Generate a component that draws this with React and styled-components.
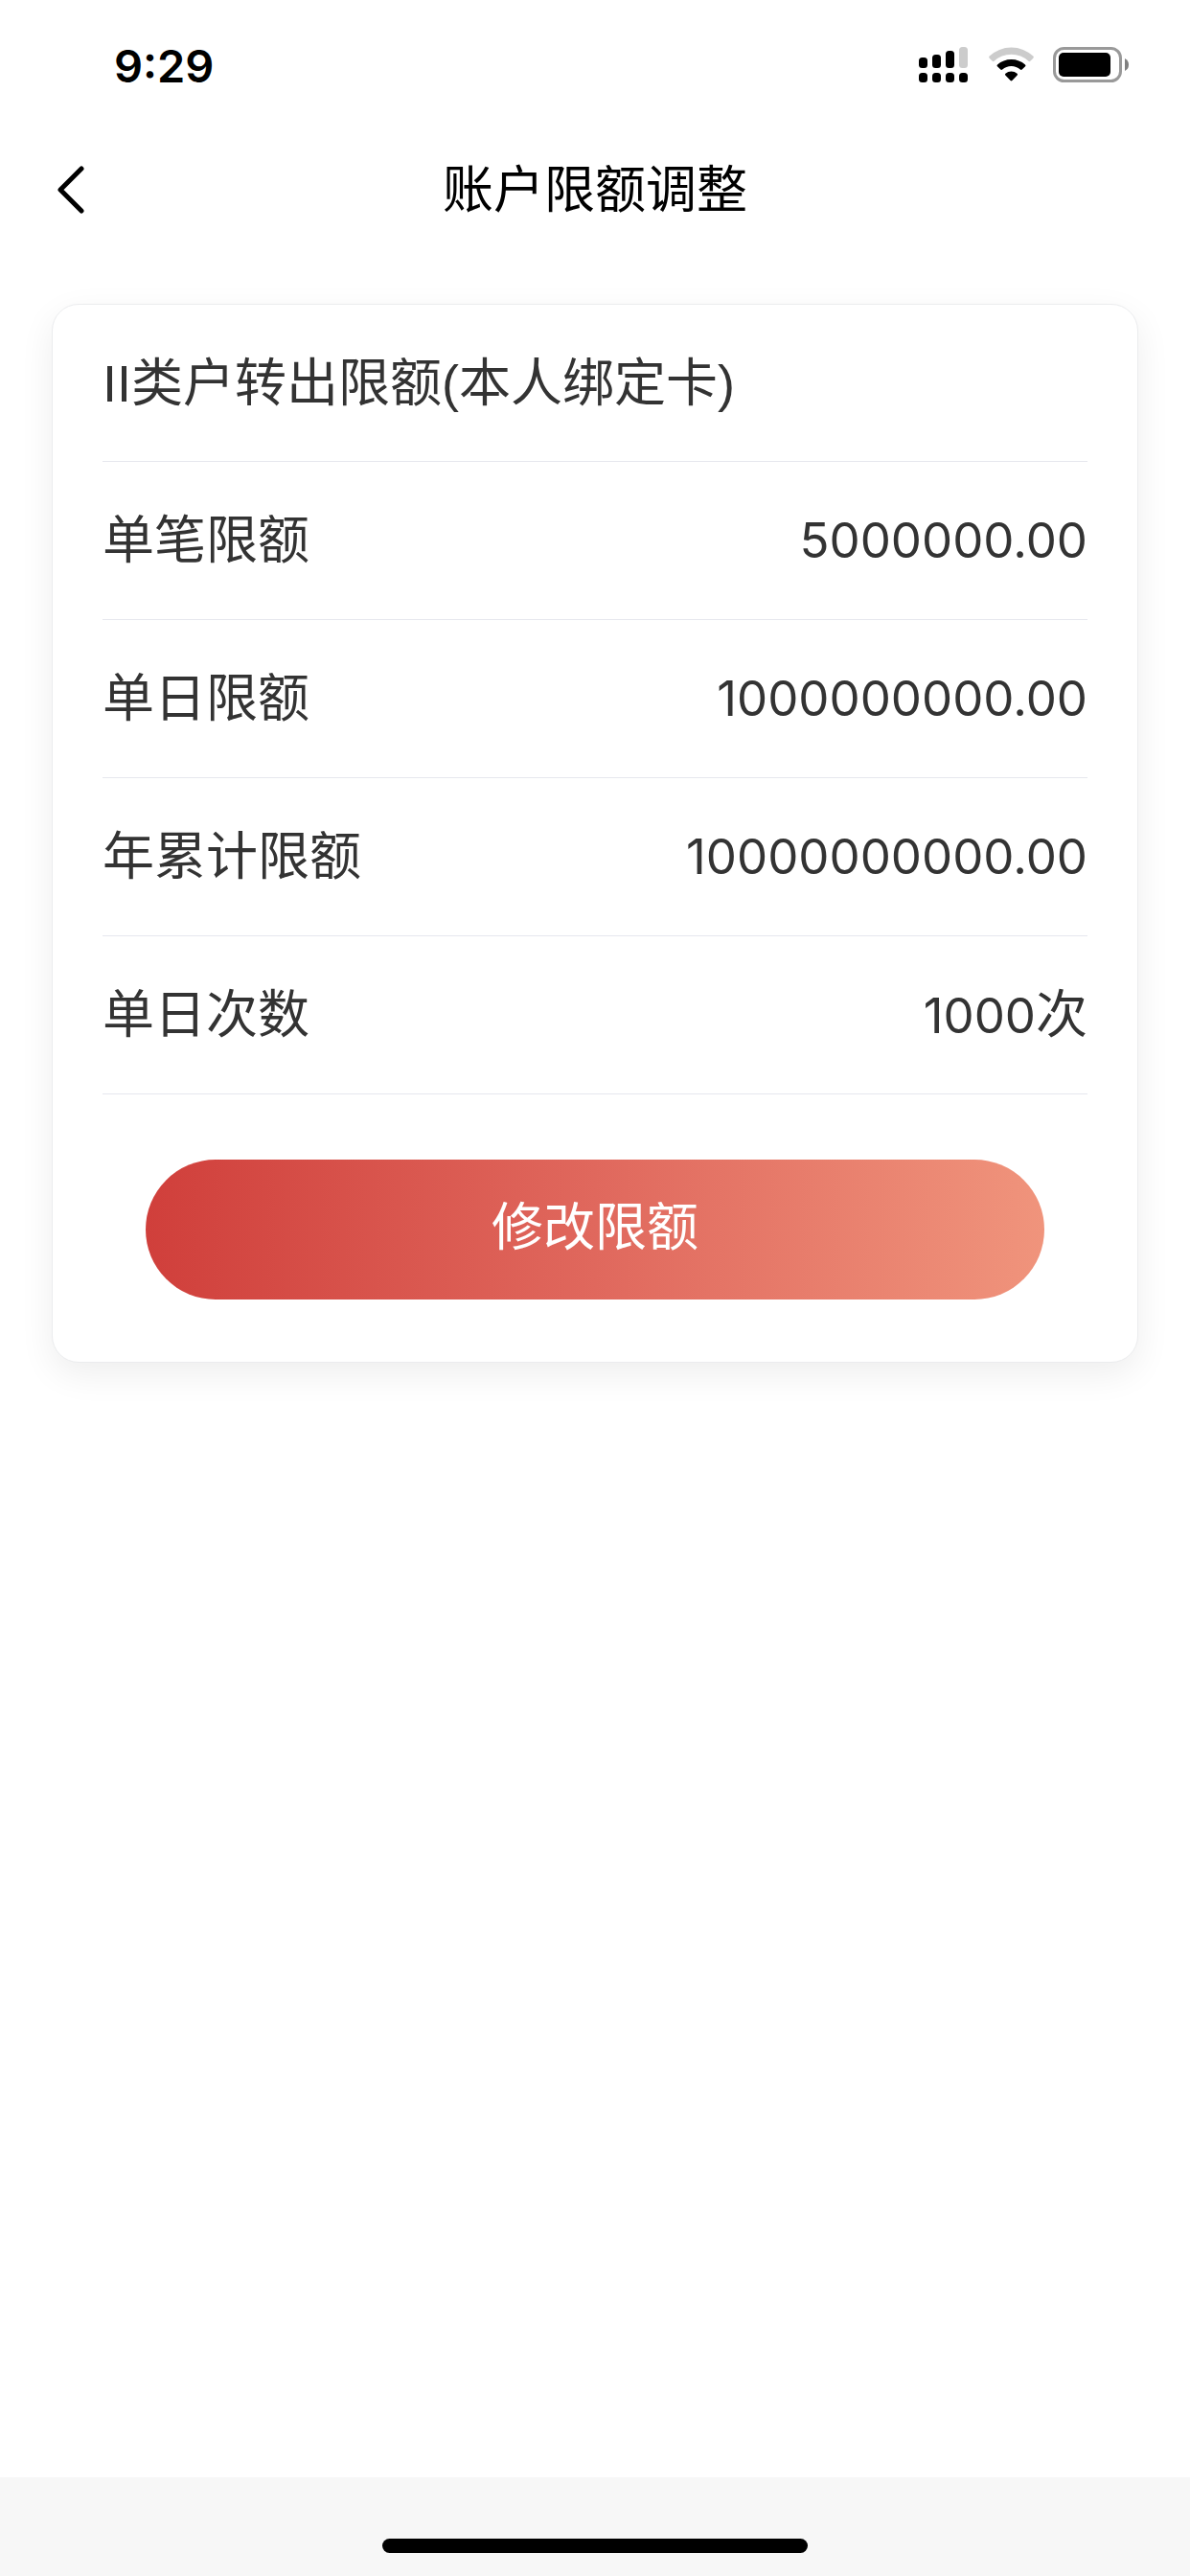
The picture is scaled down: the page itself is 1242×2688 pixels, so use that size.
import React from "react"
import styled, { createGlobalStyle } from "styled-components"

const GlobalStyle = createGlobalStyle`
    * {
        box-sizing: border-box;
    }
    body {
        margin: 0;
        background-color: #fff;
        font-family: Inter, "Noto Sans CJK SC", sans-serif;
    }
`

const limits = [
    { label: "单笔限额", value: "5000000.00" },
    { label: "单日限额", value: "1000000000.00" },
    { label: "年累计限额", value: "10000000000.00" },
    { label: "单日次数", value: "1000", unit: "次" },
]

const Page = styled.div`
    display: flex;
    flex-direction: column;
    min-height: 100vh;
`

const StatusBar = styled.div`
    display: flex;
    align-items: center;
    justify-content: space-between;
    height: 136px;
    padding: 0 64px 0 119px;
`

const Time = styled.span`
    font-size: 47px;
    font-weight: 600;
    color: #000;
`

const StatusIcons = styled.div`
    display: flex;
    align-items: center;
    gap: 20px;

    svg {
        display: block;
    }
`

const NavBar = styled.header`
    display: grid;
    grid-template-columns: 120px 1fr 120px;
    align-items: center;
    height: 124px;
`

const BackButton = styled.button`
    display: flex;
    align-items: center;
    height: 100%;
    padding: 0 0 0 60px;
    border: 0;
    background: none;
`

const Title = styled.h1`
    margin: 0;
    text-align: center;
    font-size: 53px;
    font-weight: 400;
    line-height: 72px;
    color: #000;
`

const Card = styled.main`
    margin: 57px 54px 0;
    padding: 0 52px 65px;
    border: 1px solid #ebecee;
    border-radius: 28px;
    background-color: #fff;
    box-shadow: 0 12px 36px rgba(0, 0, 0, 0.07);
`

const CardTitle = styled.h2`
    display: flex;
    align-items: center;
    height: 164px;
    margin: 0;
    border-bottom: 1px solid #e6e8ee;
    font-family: "Liberation Sans", "Noto Sans CJK SC", sans-serif;
    font-size: 54px;
    font-weight: 400;
    line-height: 72px;
    color: #333;
`

const LimitList = styled.dl`
    margin: 0 0 68px;
`

const LimitRow = styled.div`
    display: flex;
    align-items: center;
    justify-content: space-between;
    height: 165px;
    border-bottom: 1px solid #e6e8ee;
    line-height: 72px;
    color: #333;
`

const Label = styled.dt`
    font-size: 54px;
`

const Value = styled.dd`
    margin: 0;
    font-size: 51px;
`

const Unit = styled.span`
    font-size: 54px;
`

const SubmitWrap = styled.div`
    padding: 0 45px;
`

const SubmitButton = styled.button`
    display: block;
    width: 100%;
    height: 146px;
    padding: 0 0 4px;
    border: 0;
    border-radius: 73px;
    background: linear-gradient(90deg, #d03f3b, #e0685d 50%, #f0947c);
    font-family: inherit;
    font-size: 54px;
    line-height: 72px;
    color: #fff;
`

const HomeArea = styled.footer`
    display: flex;
    justify-content: center;
    align-items: flex-end;
    height: 103px;
    margin-top: auto;
    padding-bottom: 24px;
    background-color: #f7f7f7;
`

const HomeIndicator = styled.div`
    width: 444px;
    height: 15px;
    border-radius: 8px;
    background-color: #000;
`

const SignalIcon = () => (
    <svg width="53" height="38" viewBox="0 0 53 38">
        <rect x="0" y="11" width="9" height="11" rx="3.5" />
        <rect x="14" y="8" width="9" height="14" rx="3.5" />
        <rect x="28" y="4" width="9" height="18" rx="3.5" />
        <rect x="42" y="0" width="9" height="22" rx="3.5" fill="#ccc" />
        <rect x="0" y="27" width="9" height="10" rx="3.5" />
        <rect x="14" y="27" width="9" height="10" rx="3.5" />
        <rect x="28" y="27" width="9" height="10" rx="3.5" />
        <rect x="42" y="27" width="9" height="10" rx="3.5" />
    </svg>
)

const WifiIcon = () => (
    <svg width="47" height="38" viewBox="0 0 47 38">
        <path d="M0.4 9.8 Q-0.2 10.8 0.7 11.7 L3.7 14.8 Q4.6 15.6 5.6 14.8 A26 26 0 0 1 41.4 14.8 Q42.4 15.6 43.3 14.8 L46.3 11.7 Q47.2 10.8 46.6 9.8 A33.5 33.5 0 0 0 0.4 9.8 Z" fill="#ccc" />
        <path d="M9 18.4 Q8 19.3 8.9 20.2 L12.3 23.6 Q13.2 24.4 14.2 23.6 A14 14 0 0 1 32.8 23.6 Q33.8 24.4 34.7 23.6 L38.1 20.2 Q39 19.3 38 18.4 A21.8 21.8 0 0 0 9 18.4 Z" />
        <path d="M17.4 27.8 A9.3 9.3 0 0 1 29.6 27.8 Q30.5 28.7 29.7 29.5 L24.4 35 Q23.5 35.9 22.6 35 L17.3 29.5 Q16.5 28.7 17.4 27.8 Z" />
    </svg>
)

const BatteryIcon = () => (
    <svg width="79" height="38" viewBox="0 0 79 38">
        <rect x="1.5" y="1.5" width="69" height="34" rx="10" fill="none" stroke="#999" strokeWidth="3" />
        <rect x="6" y="6" width="54" height="25" rx="5" />
        <path d="M75 12 Q79 14 79 18.5 Q79 23 75 25 Z" fill="#808080" />
    </svg>
)

const BackIcon = () => (
    <svg width="28" height="50" viewBox="0 0 28 50">
        <path d="M25 3 L3 25 L25 47" fill="none" stroke="#000" strokeWidth="5" strokeLinecap="round" strokeLinejoin="round" />
    </svg>
)

const App = () => {
    return (
        <Page>
            <GlobalStyle />
            <StatusBar>
                <Time>9:29</Time>
                <StatusIcons>
                    <SignalIcon />
                    <WifiIcon />
                    <BatteryIcon />
                </StatusIcons>
            </StatusBar>
            <NavBar>
                <BackButton type="button" aria-label="返回">
                    <BackIcon />
                </BackButton>
                <Title>账户限额调整</Title>
            </NavBar>
            <Card>
                <CardTitle>II类户转出限额(本人绑定卡)</CardTitle>
                <LimitList>
                    {limits.map(({ label, value, unit }) => (
                        <LimitRow key={label}>
                            <Label>{label}</Label>
                            <Value>
                                {value}
                                {unit && <Unit>{unit}</Unit>}
                            </Value>
                        </LimitRow>
                    ))}
                </LimitList>
                <SubmitWrap>
                    <SubmitButton type="button">修改限额</SubmitButton>
                </SubmitWrap>
            </Card>
            <HomeArea>
                <HomeIndicator />
            </HomeArea>
        </Page>
    )
}

export default App
